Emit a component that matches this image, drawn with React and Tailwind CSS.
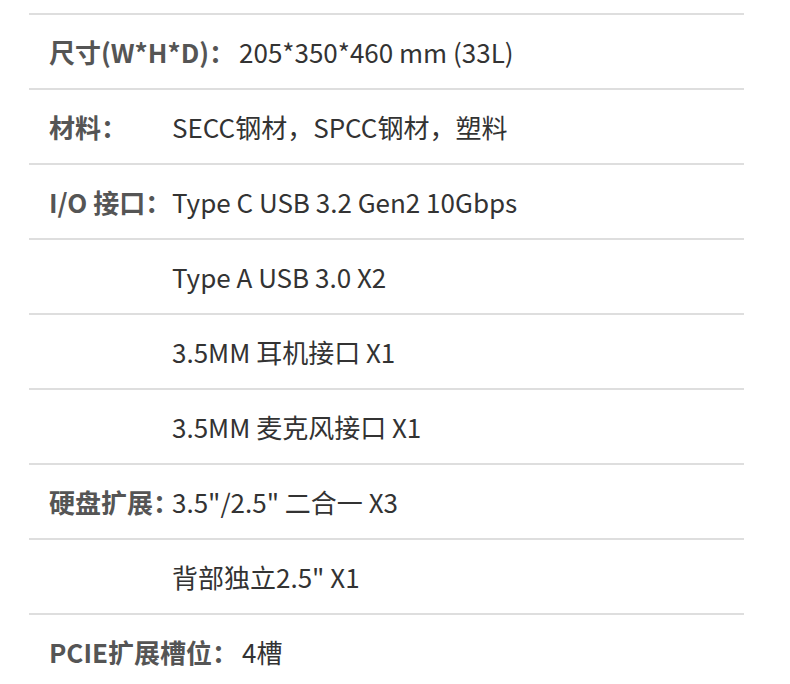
import React from "react";

const rows = [
  { label: "尺寸(W*H*D)：", value: "205*350*460 mm (33L)", inline: true },
  { label: "材料：", value: "SECC钢材，SPCC钢材，塑料" },
  { label: "I/O 接口：", value: "Type C USB 3.2 Gen2 10Gbps" },
  { label: "", value: "Type A USB 3.0 X2" },
  { label: "", value: "3.5MM 耳机接口 X1" },
  { label: "", value: "3.5MM 麦克风接口 X1" },
  { label: "硬盘扩展：", value: "3.5\"/2.5\" 二合一 X3" },
  { label: "", value: "背部独立2.5\" X1" },
  { label: "PCIE扩展槽位：", value: "4槽", inline: true },
];

export default function App() {
  return (
    <div
      className="w-[790px] h-[684px] bg-white overflow-hidden pt-[13px]"
      style={{ fontFamily: '"Noto Sans CJK SC", "Noto Sans", sans-serif' }}
    >
      <div className="ml-[29px] w-[715px]">
        {rows.map((r, i) => (
          <div
            key={i}
            className="h-[75px] border-t-2 border-[#dedede] flex items-center pl-[20px] text-[26px] leading-none"
          >
            {r.inline ? (
              <span className="font-bold text-[#555555] whitespace-pre">{r.label}</span>
            ) : (
              <span className="w-[123px] shrink-0 font-bold text-[#555555] whitespace-nowrap">{r.label}</span>
            )}
            <span className={"text-[#333333] whitespace-pre" + (r.inline ? " ml-[4px]" : "")}>{r.value}</span>
          </div>
        ))}
      </div>
    </div>
  );
}
